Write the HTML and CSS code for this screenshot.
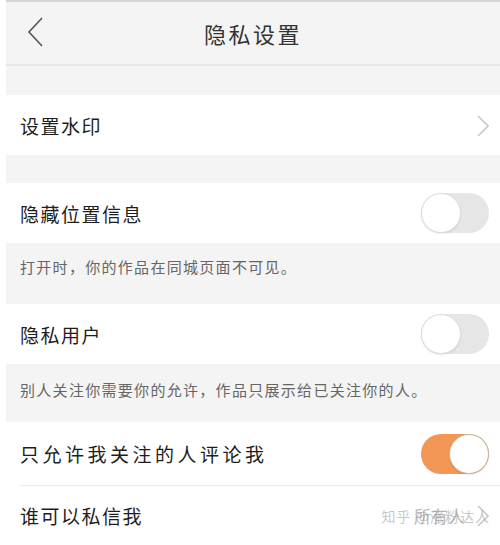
FILE: index.html
```html
<!DOCTYPE html>
<html lang="zh-CN">
<head>
    <meta charset="UTF-8">
    <meta name="viewport" content="width=device-width, initial-scale=1.0">
    <title>隐私设置</title>
    <link rel="stylesheet" href="styles.css">
</head>
<body>
<div class="page">
    <!-- Header -->
    <div class="header">
        <svg class="back" width="16" height="30" viewBox="0 0 16 30">
            <path d="M15 1 L2 15 L15 29" fill="none" stroke="#555" stroke-width="1.6"/>
        </svg>
        <div class="title">隐私设置</div>
    </div>

    <div class="gap gap-top"></div>

    <div class="row">
        <span class="label">设置水印</span>
        <svg class="chevron" width="12" height="22" viewBox="0 0 12 22">
            <path d="M1 1 L11 11 L1 21" fill="none" stroke="#c8c8c8" stroke-width="1.6"/>
        </svg>
    </div>

    <div class="gap"></div>

    <div class="row">
        <span class="label">隐藏位置信息</span>
        <span class="toggle"><span class="knob"></span></span>
    </div>
    <div class="desc">打开时，你的作品在同城页面不可见。</div>

    <div class="row">
        <span class="label">隐私用户</span>
        <span class="toggle"><span class="knob"></span></span>
    </div>
    <div class="desc desc-short">别人关注你需要你的允许，作品只展示给已关注你的人。</div>

    <div class="row row-tall">
        <span class="label label-wide">只允许我关注的人评论我</span>
        <span class="toggle on"><span class="knob"></span></span>
    </div>
    <div class="row row-last">
        <span class="label">谁可以私信我</span>
        <span class="value">所有人</span>
        <svg class="chevron" width="12" height="22" viewBox="0 0 12 22">
            <path d="M1 1 L11 11 L1 21" fill="none" stroke="#c8c8c8" stroke-width="1.6"/>
        </svg>
        <!-- watermark from the source image -->
        <span class="watermark">知乎 @涨粉达人</span>
    </div>
</div>
</body>
</html>
```

FILE: styles.css
```css
body {
    margin: 0;
    background-color: #fff;
    font-family: "Noto Sans CJK SC", "Noto Sans", sans-serif;
    color: #222;
}

.page {
    margin-left: 6px;
    border-top: 2px solid #d6d6d6;
    overflow: hidden;
    height: 543px;
}

.header {
    height: 62px;
    background-color: #f4f4f4;
    border-bottom: 2px solid #e6e6e6;
    display: flex;
    align-items: center;
    justify-content: center;
    position: relative;
}

.back {
    position: absolute;
    left: 21px;
    top: 15px;
}

.title {
    font-size: 22px;
    letter-spacing: 2.5px;
    color: #333;
}

.gap {
    height: 28px;
    background-color: #f4f4f4;
}

.gap-top {
    height: 29px;
}

.row {
    height: 60px;
    background-color: #fff;
    display: flex;
    align-items: center;
    padding: 0 11px 0 14px;
    position: relative;
}

.row-tall {
    height: 63px;
    border-bottom: 1px solid #ececec;
    margin-left: 14px;
    padding-left: 0;
}

.row-last {
    height: 58px;
}

.label {
    flex: 1;
    font-size: 19px;
    letter-spacing: 1.5px;
    color: #1e1e1e;
}

.label-wide {
    letter-spacing: 3.5px;
}

.value {
    font-size: 17px;
    color: #b8b8b8;
    margin-right: 12px;
}

.chevron {
    margin-top: 1px;
}

.watermark {
    position: absolute;
    right: 10px;
    top: 20px;
    font-size: 14px;
    color: rgba(160, 160, 160, 0.6);
    letter-spacing: 1px;
}

.toggle {
    width: 68px;
    height: 40px;
    border-radius: 20px;
    background-color: #e6e6e6;
    display: flex;
    align-items: center;
    justify-content: flex-start;
}

.knob {
    width: 38px;
    height: 38px;
    border-radius: 50%;
    background-color: #fff;
    border: 1px solid #ddd;
    box-shadow: 0 1px 2px rgba(0, 0, 0, 0.08);
}

.toggle.on {
    background-color: #f29656;
    justify-content: flex-end;
}

.toggle.on .knob {
    border-color: #c8b89c;
}

.desc {
    height: 61px;
    box-sizing: border-box;
    background-color: #f4f4f4;
    padding: 13px 14px 0;
    font-size: 15px;
    letter-spacing: 1.3px;
    color: #666;
}

.desc-short {
    height: 58px;
    padding-top: 15px;
}
```
